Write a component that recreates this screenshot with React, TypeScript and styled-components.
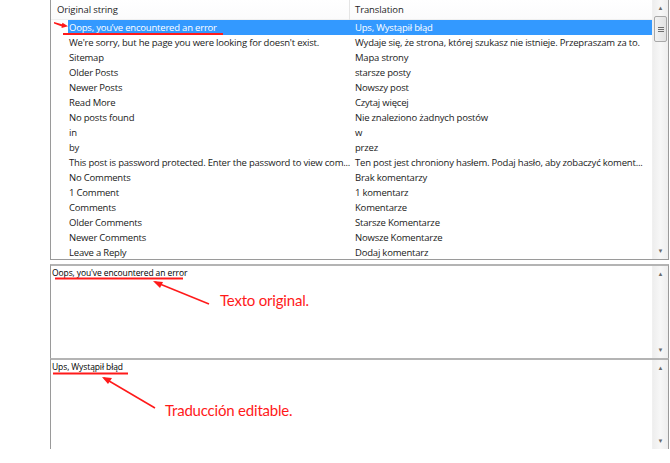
import React from 'react';
import styled, { createGlobalStyle } from 'styled-components';

const GlobalStyle = createGlobalStyle`
  html, body {
    margin: 0;
    padding: 0;
    background: #ffffff;
  }
  body {
    font-family: "Open Sans", "Noto Sans", sans-serif;
  }
`;

const Page = styled.div`
  position: relative;
  width: 670px;
  height: 463px;
  overflow: hidden;
  background: #ffffff;
`;

const Frame = styled.div`
  margin-left: 50px;
  width: 619px;
  display: flex;
  flex-direction: column;
`;

const ListPanel = styled.div`
  height: 260px;
  display: flex;
  border: 1px solid #9a9a9a;
  border-top: none;
  box-sizing: border-box;
`;

const ListBody = styled.div`
  flex: 1;
  display: flex;
  flex-direction: column;
  overflow: hidden;
`;

const Header = styled.div`
  height: 20px;
  display: grid;
  grid-template-columns: 299px 1fr;
  background: linear-gradient(#ffffff, #fbfbfc);
  border-bottom: 1px solid #f0f0f0;
  box-sizing: border-box;
`;

const HeaderCell = styled.div`
  font-size: 9.5px;
  letter-spacing: -0.1px;
  line-height: 20px;
  color: #1e1e1e;
  padding-left: 6px;
  border-right: 1px solid #e5e5e5;
  &:last-child {
    border-right: none;
    padding-left: 5px;
  }
`;

const Row = styled.div<{ $selected?: boolean }>`
  height: 15px;
  margin-left: 17px;
  display: grid;
  grid-template-columns: 282px 1fr;
  background: ${p => (p.$selected ? '#3399ff' : 'transparent')};
  color: ${p => (p.$selected ? '#ffffff' : '#1a1a1a')};
`;

const Cell = styled.div`
  font-size: 9.5px;
  letter-spacing: -0.2px;
  line-height: 15px;
  padding-left: 1px;
  white-space: nowrap;
  overflow: hidden;
  &:last-child {
    padding-left: 5px;
  }
`;

const ScrollBar = styled.div`
  width: 15px;
  display: flex;
  flex-direction: column;
  background: linear-gradient(90deg, #eeeeee, #f7f7f7 50%, #eeeeee);
  border-left: 1px solid #f0f0f0;
`;

const ArrowBtn = styled.div`
  height: 16px;
  display: flex;
  align-items: center;
  justify-content: center;
  font-size: 6px;
  color: #6a6a6a;
`;

const Track = styled.div`
  flex: 1;
  display: flex;
  flex-direction: column;
`;

const Thumb = styled.div`
  height: 26px;
  margin: 0 1px;
  border: 1px solid #a8a8a8;
  border-radius: 2px;
  background: linear-gradient(90deg, #f2f2f2, #e2e2e2);
  display: flex;
  flex-direction: column;
  align-items: center;
  justify-content: center;
  gap: 1px;
  box-sizing: border-box;
`;

const Grip = styled.div`
  width: 6px;
  height: 1px;
  background: #6e6e6e;
`;

const TextPanel = styled.div<{ $height: number }>`
  height: ${p => p.$height}px;
  display: flex;
  border-left: 1px solid #9a9a9a;
  border-right: 1px solid #9a9a9a;
  border-top: 2px solid #b4b4b4;
  box-sizing: border-box;
`;

const Gap = styled.div`
  height: 4px;
`;

const TextArea = styled.div`
  flex: 1;
  font-family: "Open Sans", "Noto Sans", sans-serif;
  font-size: 8.5px;
  letter-spacing: -0.1px;
  line-height: 13px;
  color: #000000;
  padding: 0 1px;
`;

const Overlay = styled.svg`
  position: absolute;
  left: 0;
  top: 0;
  pointer-events: none;
`;

const Note = styled.div<{ $x: number; $y: number }>`
  position: absolute;
  left: ${p => p.$x}px;
  top: ${p => p.$y}px;
  color: #ff1a1a;
  font-family: "Lato", "Open Sans", sans-serif;
  font-size: 15px;
  letter-spacing: -0.2px;
  white-space: nowrap;
`;

const rows: [string, string][] = [
  ['Oops, you\u2019ve encountered an error', 'Ups, Wystąpił błąd'],
  ["We're sorry, but he page you were looking for doesn't exist.", 'Wydaje się, że strona, której szukasz nie istnieje. Przepraszam za to.'],
  ['Sitemap', 'Mapa strony'],
  ['Older Posts', 'starsze posty'],
  ['Newer Posts', 'Nowszy post'],
  ['Read More', 'Czytaj więcej'],
  ['No posts found', 'Nie znaleziono żadnych postów'],
  ['in', 'w'],
  ['by', 'przez'],
  ['This post is password protected. Enter the password to view com...', 'Ten post jest chroniony hasłem. Podaj hasło, aby zobaczyć koment...'],
  ['No Comments', 'Brak komentarzy'],
  ['1 Comment', '1 komentarz'],
  ['Comments', 'Komentarze'],
  ['Older Comments', 'Starsze Komentarze'],
  ['Newer Comments', 'Nowsze Komentarze'],
  ['Leave a Reply', 'Dodaj komentarz'],
];

const VScroll: React.FC<{ thumb?: boolean }> = ({ thumb }) => (
  <ScrollBar>
    <ArrowBtn>▲</ArrowBtn>
    <Track>
      {thumb && (
        <Thumb>
          <Grip />
          <Grip />
          <Grip />
        </Thumb>
      )}
    </Track>
    <ArrowBtn>▼</ArrowBtn>
  </ScrollBar>
);

const App: React.FC = () => {
  return (
    <Page>
      <GlobalStyle />
      <Frame>
        <ListPanel>
          <ListBody>
            <Header>
              <HeaderCell>Original string</HeaderCell>
              <HeaderCell>Translation</HeaderCell>
            </Header>
            {rows.map(([orig, trans], i) => (
              <Row key={i} $selected={i === 0}>
                <Cell>{orig}</Cell>
                <Cell>{trans}</Cell>
              </Row>
            ))}
          </ListBody>
          <VScroll thumb />
        </ListPanel>
        <Gap />
        <TextPanel $height={94}>
          <TextArea>Oops, you've encountered an error</TextArea>
          <VScroll />
        </TextPanel>
        <TextPanel $height={91}>
          <TextArea>Ups, Wystąpił błąd</TextArea>
          <VScroll />
        </TextPanel>
      </Frame>

      <Overlay width="670" height="463" viewBox="0 0 670 463">
        <polygon points="54,22 62,24.2 62.5,22.8 68,26.2 61.5,28 61.8,26.6 54,23.6" fill="#ff1a1a" />
        <line x1="63" y1="34" x2="223" y2="34" stroke="#ff1a1a" strokeWidth="2" />

        <line x1="55" y1="278.5" x2="183" y2="278.5" stroke="#ff1a1a" strokeWidth="2" />
        <line x1="209" y1="304" x2="155" y2="282" stroke="#ff1a1a" strokeWidth="1.5" />
        <polygon points="153,281 163,282 160,288" fill="#ff1a1a" />

        <line x1="53" y1="373.5" x2="128" y2="373.5" stroke="#ff1a1a" strokeWidth="2" />
        <line x1="155" y1="408" x2="104" y2="378" stroke="#ff1a1a" strokeWidth="1.5" />
        <polygon points="102,377 112,378 108,384" fill="#ff1a1a" />
      </Overlay>

      <Note $x={220} $y={291}>Texto original.</Note>
      <Note $x={165} $y={401}>Traducción editable.</Note>
    </Page>
  );
};

export default App;
